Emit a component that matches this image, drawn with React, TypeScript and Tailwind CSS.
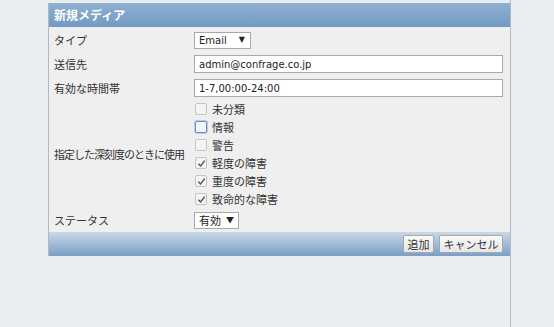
import React from 'react';

const jp = "font-['Noto_Sans_CJK_JP','Noto_Sans',sans-serif]";
const latin = "font-['DejaVu_Sans','Noto_Sans_CJK_JP',sans-serif]";

const severities = [
  { label: '未分類', checked: false },
  { label: '情報', checked: false, focus: true },
  { label: '警告', checked: false },
  { label: '軽度の障害', checked: true },
  { label: '重度の障害', checked: true },
  { label: '致命的な障害', checked: true },
];

function Check({ checked, focus }: { checked: boolean; focus?: boolean }) {
  return (
    <span
      className={`flex h-[12px] w-[12px] items-center justify-center rounded-[2px] border bg-[#f4f4f4] ${
        focus ? 'border-[#6d8fc9] shadow-[0_0_0_1px_#b9cbe8]' : 'border-[#c4c4c4]'
      }`}
    >
      {checked && (
        <svg viewBox="0 0 10 10" className="h-[9px] w-[9px]">
          <path d="M1.5 5.2 L4 7.8 L8.6 1.8" fill="none" stroke="#555" strokeWidth="1.6" />
        </svg>
      )}
    </span>
  );
}

function Row({ label, children }: { label: string; children: React.ReactNode }) {
  return (
    <div className="flex h-[24px] items-center">
      <div className="w-[145px] whitespace-nowrap pl-[5px] text-[11px] text-[#333]">{label}</div>
      <div className="flex flex-1 items-center pr-[7px]">{children}</div>
    </div>
  );
}

export default function App() {
  return (
    <div className={`h-[327px] w-[554px] bg-[#ebeef1] ${jp}`}>
      <div className="ml-[48px] h-full w-[463px] border-r border-[#b4b8bc] pt-[3px]">
        <div className="border-l border-[#b4b8bc]">
          {/* Header */}
          <div className="flex h-[24px] items-center bg-gradient-to-b from-[#8fb0d2] to-[#729ac3] pl-[5px] text-[12px] font-bold text-white">
            新規メディア
          </div>

          {/* Body */}
          <div className="bg-[#efefef] pt-[1px]">
            <Row label="タイプ">
              <div className={`flex h-[17px] w-[57px] items-center justify-between border border-[#a9a9a9] bg-white pl-[4px] pr-[5px] text-[10px] text-[#222] ${latin}`}>
                <span>Email</span>
                <span className="text-[8px]">▼</span>
              </div>
            </Row>
            <Row label="送信先">
              <div className={`flex h-[18px] w-full items-center border border-[#a9a9a9] bg-white pl-[4px] text-[10px] text-[#222] ${latin}`}>
                admin@confrage.co.jp
              </div>
            </Row>
            <Row label="有効な時間帯">
              <div className={`flex h-[18px] w-full items-center border border-[#a9a9a9] bg-white pl-[4px] text-[10px] text-[#222] ${latin}`}>
                1-7,00:00-24:00
              </div>
            </Row>
            <div className="flex items-center">
              <div className="w-[145px] whitespace-nowrap pl-[5px] text-[11px] tracking-[-1px] text-[#333]">
                指定した深刻度のときに使用
              </div>
              <div className="flex flex-col">
                {severities.map((s) => (
                  <div key={s.label} className="flex h-[18px] items-center gap-[5px] pl-[1px] text-[11px] text-[#333]">
                    <Check checked={s.checked} focus={s.focus} />
                    <span>{s.label}</span>
                  </div>
                ))}
              </div>
            </div>
            <Row label="ステータス">
              <div className="flex h-[17px] w-[45px] items-center justify-between border border-[#a9a9a9] bg-white pl-[4px] pr-[4px] text-[11px] text-[#222]">
                <span>有効</span>
                <span className="text-[8px]">▼</span>
              </div>
            </Row>
          </div>

          {/* Footer */}
          <div className="flex h-[24px] items-center justify-end gap-[5px] bg-gradient-to-b from-[#c9d8e7] to-[#7a9fc6] pr-[7px]">
            <button className="h-[18px] w-[31px] rounded-[2px] border border-[#a8a8a8] bg-gradient-to-b from-[#fafafa] to-[#e6e6e6] text-[11px] text-[#333]">
              追加
            </button>
            <button className="h-[18px] w-[64px] rounded-[2px] border border-[#a8a8a8] bg-gradient-to-b from-[#fafafa] to-[#e6e6e6] text-[11px] text-[#333]">
              キャンセル
            </button>
          </div>
        </div>
      </div>
    </div>
  );
}
